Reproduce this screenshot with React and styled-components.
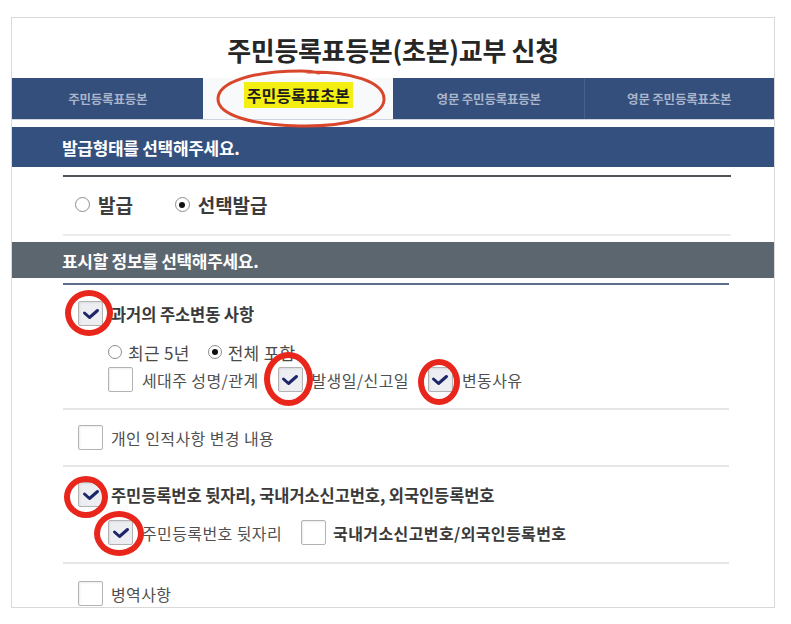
import React from "react";
import styled, { createGlobalStyle, css } from "styled-components";

const GlobalStyle = createGlobalStyle`
  html, body { margin: 0; padding: 0; background: #ffffff; }
  body { font-family: "Noto Sans CJK KR", "Noto Sans", sans-serif; }
  * { box-sizing: border-box; }
`;

const Panel = styled.div`
  margin: 17px 0 0 11px;
  width: 764px;
  height: 591px;
  border: 1px solid #d9d9d9;
  overflow: hidden;
  display: flex;
  flex-direction: column;
  background: #fff;
`;

const Title = styled.h1`
  margin: 0;
  height: 60px;
  flex: none;
  display: flex;
  align-items: center;
  justify-content: center;
  padding-top: 2px;
  font-size: 26px;
  font-weight: 700;
  color: #262626;
  letter-spacing: -0.3px;
`;

const TabBar = styled.div`
  flex: none;
  display: grid;
  grid-template-columns: repeat(4, 1fr);
  height: 42px;
  margin-bottom: 7px;
  background: #354f7d;
  border-bottom: 1px solid #cfd5df;
`;

const Tab = styled.div`
  position: relative;
  display: flex;
  align-items: center;
  justify-content: center;
  font-size: 12.5px;
  font-weight: 700;
  color: #a9b5ca;
  letter-spacing: -0.2px;
  border-left: 1px solid ${(p) => (p.$divided ? "rgba(255,255,255,0.10)" : "transparent")};
  ${(p) =>
    p.$active &&
    css`
      background: #f8f9fa;
      color: #1d1d1d;
      font-size: 16px;
      padding-bottom: 7px;
      letter-spacing: 0;
    `}
`;

const Highlight = styled.span`
  background: #f3ef12;
  padding: 1px 3px;
  line-height: 24px;
`;

const TabRing = styled.svg`
  position: absolute;
  left: 11px;
  top: -9px;
  width: 172px;
  height: 60px;
  overflow: visible;
  pointer-events: none;
  z-index: 3;
`;

const SectionHeader = styled.div`
  flex: none;
  height: ${(p) => p.$h}px;
  background: ${(p) => (p.$tone === "navy" ? "#34507f" : "#5b666f")};
  color: #ffffff;
  font-size: 17px;
  font-weight: 700;
  letter-spacing: -0.3px;
  display: flex;
  align-items: center;
  padding-left: 50px;
`;

const IssueBody = styled.div`
  flex: none;
  padding: 8px 43px 0 51px;
  margin-bottom: 6px;
`;

const IssueRow = styled.div`
  height: 61px;
  border-top: 2px solid #4f5458;
  border-bottom: 2px solid #ececec;
  display: flex;
  align-items: center;
  gap: 42px;
  padding-left: 12px;
  padding-bottom: 2px;
`;

const RadioLabel = styled.label`
  display: flex;
  align-items: center;
  gap: ${(p) => (p.$large ? 8 : 6)}px;
  font-size: ${(p) => (p.$large ? 19 : 17)}px;
  font-weight: ${(p) => (p.$large ? 700 : 400)};
  letter-spacing: ${(p) => (p.$large ? "-0.1px" : "0.3px")};
  color: ${(p) => (p.$large ? "#3c3c3c" : "#4a4a4a")};
`;

const RadioDot = styled.span`
  width: ${(p) => (p.$large ? 15 : 14)}px;
  height: ${(p) => (p.$large ? 15 : 14)}px;
  border-radius: 50%;
  border: 1.5px solid #8d8d8d;
  background: #fff;
  display: flex;
  align-items: center;
  justify-content: center;
  flex: none;
  &::after {
    content: "";
    width: 6px;
    height: 6px;
    border-radius: 50%;
    background: ${(p) => (p.$checked ? "#111" : "transparent")};
  }
`;

const List = styled.div`
  flex: none;
  padding: 5px 45px 0 51px;
`;

const ListInner = styled.div`
  border-top: 2px solid #5d6f8c;
`;

const Row = styled.div`
  border-bottom: 2px solid #e6e6e6;
  padding: ${(p) => p.$pt}px 0 ${(p) => p.$pb}px 15px;
  display: flex;
  flex-direction: column;
`;

const Line = styled.div`
  display: flex;
  align-items: center;
  height: ${(p) => p.$h || 25}px;
  margin-top: ${(p) => p.$mt || 0}px;
  padding-left: ${(p) => (p.$sub ? 30 : 0)}px;
  gap: ${(p) => p.$gap || 18}px;
`;

const Item = styled.label`
  display: flex;
  align-items: center;
  gap: ${(p) => p.$gap || 9}px;
  font-size: ${(p) => (p.$main ? 16.5 : 16)}px;
  font-weight: ${(p) => (p.$bold ? 700 : 400)};
  color: ${(p) => (p.$bold ? "#3a3a3a" : "#505050")};
  letter-spacing: ${(p) => (p.$main ? -0.1 : 0.4)}px;
  white-space: nowrap;
`;

const Box = styled.span`
  position: relative;
  flex: none;
  width: 25px;
  height: 25px;
  border: 1.5px solid #b3b3b3;
  border-radius: 2px;
  background: ${(p) => (p.$checked ? "#eceef2" : "#ffffff")};
  box-shadow: inset 1px 1px 2px rgba(0, 0, 0, 0.08);
  display: flex;
  align-items: center;
  justify-content: center;
`;

const Ring = styled.span`
  position: absolute;
  left: 50%;
  top: 50%;
  width: ${(p) => p.$w}px;
  height: ${(p) => p.$h}px;
  margin-left: ${(p) => -p.$w / 2 + (p.$dx || 0)}px;
  margin-top: ${(p) => -p.$h / 2 + (p.$dy || 0)}px;
  border: 6px solid #e8261b;
  border-radius: 50%;
  z-index: 2;
  pointer-events: none;
`;

const CheckMark = () => (
  <svg width="18" height="14" viewBox="0 0 18 14">
    <path d="M2.5 6 L7.5 10.5 L15.5 3.5" fill="none" stroke="#1d2668" strokeWidth="3" strokeLinecap="round" strokeLinejoin="round" />
  </svg>
);

const Check = ({ checked, ring, children, main, bold, gap }) => (
  <Item $main={main} $bold={bold} $gap={gap}>
    <Box $checked={checked}>
      {checked && <CheckMark />}
      {ring && <Ring $w={ring.w} $h={ring.h} $dx={ring.dx} $dy={ring.dy} />}
    </Box>
    {children}
  </Item>
);

const Radio = ({ checked, large, children }) => (
  <RadioLabel $large={large}>
    <RadioDot $checked={checked} $large={large} />
    {children}
  </RadioLabel>
);

export default function App() {
  return (
    <>
      <GlobalStyle />
      <Panel>
        <Title>주민등록표등본(초본)교부 신청</Title>
        <TabBar>
          <Tab>주민등록표등본</Tab>
          <Tab $active>
            <Highlight>주민등록표초본</Highlight>
            <TabRing viewBox="0 0 172 60">
              <path
                d="M92 3 C136 2 170 13 169 31 C168 48 130 58 84 57 C40 56 3 47 3 30 C3 13 38 2 86 2 C94 2 100 3 104 4"
                fill="none"
                stroke="#d8462b"
                strokeWidth="3"
                strokeLinecap="round"
              />
            </TabRing>
          </Tab>
          <Tab>영문 주민등록표등본</Tab>
          <Tab $divided>영문 주민등록표초본</Tab>
        </TabBar>

        <SectionHeader $tone="navy" $h={40}>발급형태를 선택해주세요.</SectionHeader>
        <IssueBody>
          <IssueRow>
            <Radio large>발급</Radio>
            <Radio large checked>선택발급</Radio>
          </IssueRow>
        </IssueBody>

        <SectionHeader $tone="gray" $h={36}>표시할 정보를 선택해주세요.</SectionHeader>
        <List>
          <ListInner>
            <Row $pt={16} $pb={16}>
              <Line>
                <Check checked bold main gap={8} ring={{ w: 48, h: 46, dx: -2, dy: -1 }}>
                  과거의 주소변동 사항
                </Check>
              </Line>
              <Line $sub $mt={16} $h={20} $gap={18}>
                <Radio>최근 5년</Radio>
                <Radio checked>전체 포함</Radio>
              </Line>
              <Line $sub $mt={5} $gap={19}>
                <Check>세대주 성명/관계</Check>
                <Check checked ring={{ w: 49, h: 54, dx: -2, dy: -1 }}>발생일/신고일</Check>
                <Check checked ring={{ w: 42, h: 46, dx: -1, dy: 2 }}>변동사유</Check>
              </Line>
            </Row>
            <Row $pt={15} $pb={15}>
              <Line>
                <Check gap={8}>개인 인적사항 변경 내용</Check>
              </Line>
            </Row>
            <Row $pt={15} $pb={17}>
              <Line>
                <Check checked bold main gap={8} ring={{ w: 44, h: 42, dx: -5, dy: 2 }}>
                  주민등록번호 뒷자리, 국내거소신고번호, 외국인등록번호
                </Check>
              </Line>
              <Line $sub $mt={13} $gap={19}>
                <Check checked ring={{ w: 50, h: 45, dx: -2, dy: 1 }}>주민등록번호 뒷자리</Check>
                <Check bold gap={7}>국내거소신고번호/외국인등록번호</Check>
              </Line>
            </Row>
            <Row $pt={17} $pb={15}>
              <Line>
                <Check gap={8}>병역사항</Check>
              </Line>
            </Row>
          </ListInner>
        </List>
      </Panel>
    </>
  );
}
